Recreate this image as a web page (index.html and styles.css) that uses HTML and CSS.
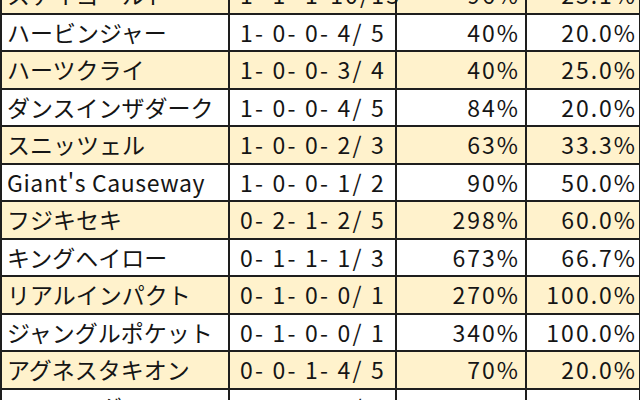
FILE: index.html
```html
<!DOCTYPE html>
<html lang="ja">
<head>
<meta charset="utf-8">
<link rel="stylesheet" href="styles.css">
</head>
<body>
<table class="stats">
  <colgroup>
    <col class="c-name"><col class="c-rec"><col class="c-ret"><col class="c-rate">
  </colgroup>
  <tbody>
    <tr class="alt"><td class="name">ステイゴールド</td><td class="rec">1- 1- 1-10/13</td><td class="num">96%</td><td class="num last">23.1%</td></tr>
    <tr><td class="name">ハービンジャー</td><td class="rec">1- 0- 0- 4/ 5</td><td class="num">40%</td><td class="num last">20.0%</td></tr>
    <tr class="alt"><td class="name">ハーツクライ</td><td class="rec">1- 0- 0- 3/ 4</td><td class="num">40%</td><td class="num last">25.0%</td></tr>
    <tr><td class="name">ダンスインザダーク</td><td class="rec">1- 0- 0- 4/ 5</td><td class="num">84%</td><td class="num last">20.0%</td></tr>
    <tr class="alt"><td class="name">スニッツェル</td><td class="rec">1- 0- 0- 2/ 3</td><td class="num">63%</td><td class="num last">33.3%</td></tr>
    <tr><td class="name latin">Giant's Causeway</td><td class="rec">1- 0- 0- 1/ 2</td><td class="num">90%</td><td class="num last">50.0%</td></tr>
    <tr class="alt"><td class="name">フジキセキ</td><td class="rec">0- 2- 1- 2/ 5</td><td class="num">298%</td><td class="num last">60.0%</td></tr>
    <tr><td class="name">キングヘイロー</td><td class="rec">0- 1- 1- 1/ 3</td><td class="num">673%</td><td class="num last">66.7%</td></tr>
    <tr class="alt"><td class="name">リアルインパクト</td><td class="rec">0- 1- 0- 0/ 1</td><td class="num">270%</td><td class="num last">100.0%</td></tr>
    <tr><td class="name">ジャングルポケット</td><td class="rec">0- 1- 0- 0/ 1</td><td class="num">340%</td><td class="num last">100.0%</td></tr>
    <tr class="alt"><td class="name">アグネスタキオン</td><td class="rec">0- 0- 1- 4/ 5</td><td class="num">70%</td><td class="num last">20.0%</td></tr>
    <tr><td class="name">ローエングリン</td><td class="rec">0- 0- 1- 1/ 2</td><td class="num">140%</td><td class="num last">50.0%</td></tr>
  </tbody>
</table>
</body>
</html>
```
FILE: styles.css
```css
html, body {
  margin: 0;
  padding: 0;
  background: #ffffff;
  overflow: hidden;
}
body {
  width: 640px;
  height: 400px;
  font-family: "Noto Sans CJK JP", "Noto Sans", sans-serif;
  color: #151515;
}
.stats {
  border-collapse: collapse;
  table-layout: fixed;
  width: 639px;
  margin-top: -25px;
  font-size: 23px;
}
.c-name { width: 228px; }
.c-rec { width: 167px; }
.c-ret { width: 130px; }
.c-rate { width: 114px; }
.stats td {
  border: 2px solid #1e1e1e;
  height: 37.5px;
  padding: 0;
  vertical-align: middle;
  white-space: pre;
  line-height: 1;
  box-sizing: border-box;
}
.stats tr.alt td { background: #fff2cc; }
.name { padding-left: 5px !important; }
.latin { letter-spacing: 0.6px; }
.rec { padding-left: 10px !important; letter-spacing: 2.2px; }
.num { text-align: right; padding-right: 5px !important; letter-spacing: 2px; }
.num.last { padding-right: 2px !important; }
```
